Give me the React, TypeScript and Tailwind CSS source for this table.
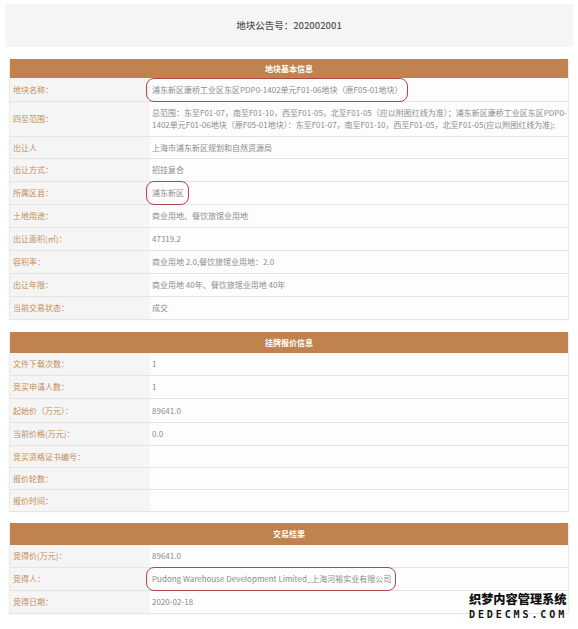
import React from "react";

type Row = { label: string; value?: React.ReactNode; h: string };

const Oval = ({ children }: { children: React.ReactNode }) => (
  <span className="relative inline-block">
    {children}
    <span className="absolute -left-[6px] -right-[5px] -top-[6px] -bottom-[6px] rounded-[8px] border-[1.5px] border-[#b0474a]" />
  </span>
);

const Section = ({ title, rows, headH }: { title: string; rows: Row[]; headH: string }) => (
  <div className="mx-[9px] border-x border-[#ececec] shadow-[0_0_2px_rgba(0,0,0,0.06)]">
    <div className={`${headH} bg-[#c0834f] flex items-center justify-center text-white text-[8px] font-bold`}>
      {title}
    </div>
    {rows.map((r, i) => (
      <div key={i} className={`${r.h} grid grid-cols-[140px_1fr] border-b border-[#e4e4e4]`}>
        <div className="bg-[#f5f5f5] flex items-center pl-[3px] text-[#c68c56] text-[8px]">{r.label}</div>
        <div className="bg-[#fdfdfd] flex items-center pl-[2px] text-[#8c8c8c] text-[8px] leading-[12px]">{r.value}</div>
      </div>
    ))}
  </div>
);

export default function App() {
  const s1: Row[] = [
    {
      label: "地块名称：",
      value: <Oval>浦东新区康桥工业区东区PDP0-1402单元F01-06地块（原F05-01地块）</Oval>,
      h: "h-[24px]",
    },
    {
      label: "四至范围：",
      value: (
        <span className="whitespace-nowrap">
          总范围：东至F01-07，南至F01-10，西至F01-05，北至F01-05（应以附图红线为准）；浦东新区康桥工业区东区PDP0-
          <br />
          1402单元F01-06地块（原F05-01地块）：东至F01-07，南至F01-10，西至F01-05，北至F01-05(应以附图红线为准);
        </span>
      ),
      h: "h-[35px]",
    },
    { label: "出让人", value: "上海市浦东新区规划和自然资源局", h: "h-[22px]" },
    { label: "出让方式：", value: "招挂复合", h: "h-[23px]" },
    { label: "所属区县：", value: <Oval>浦东新区</Oval>, h: "h-[23px]" },
    { label: "土地用途：", value: "商业用地、餐饮旅馆业用地", h: "h-[23px]" },
    { label: "出让面积(㎡)：", value: "47319.2", h: "h-[23px]" },
    { label: "容积率：", value: "商业用地 2.0,餐饮旅馆业用地：2.0", h: "h-[23px]" },
    { label: "出让年限：", value: "商业用地 40年、餐饮旅馆业用地 40年", h: "h-[23px]" },
    { label: "当前交易状态：", value: "成交", h: "h-[23px]" },
  ];
  const s2: Row[] = [
    { label: "文件下载次数：", value: "1", h: "h-[23px]" },
    { label: "竞买申请人数：", value: "1", h: "h-[23px]" },
    { label: "起始价（万元）：", value: "89641.0", h: "h-[24px]" },
    { label: "当前价格(万元)：", value: "0.0", h: "h-[23px]" },
    { label: "竞买资格证书编号：", value: "", h: "h-[22px]" },
    { label: "报价轮数：", value: "", h: "h-[22px]" },
    { label: "报价时间：", value: "", h: "h-[22px]" },
  ];
  const s3: Row[] = [
    { label: "竞得价(万元)：", value: "89641.0", h: "h-[23px]" },
    {
      label: "竞得人：",
      value: <Oval>Pudong Warehouse Development Limited_上海河裕实业有限公司</Oval>,
      h: "h-[23px]",
    },
    { label: "竞得日期：", value: "2020-02-18", h: "h-[23px]" },
  ];

  return (
    <div className="relative w-[578px] h-[629px] overflow-hidden bg-white font-['Noto_Sans_CJK_SC','Noto_Sans',sans-serif]">
      <div className="pt-[4px] px-[5px]">
        <div className="h-[43px] bg-[#f5f5f5] flex items-center justify-center text-[9.5px] font-medium text-[#555]">
          地块公告号：202002001
        </div>
      </div>
      <div className="mt-[12px]">
        <Section title="地块基本信息" rows={s1} headH="h-[19px]" />
      </div>
      <div className="mt-[12px]">
        <Section title="挂牌报价信息" rows={s2} headH="h-[21px]" />
      </div>
      <div className="mt-[11px]">
        <Section title="交易结果" rows={s3} headH="h-[22px]" />
      </div>
      <div className="absolute left-[469px] top-[592px] flex flex-col items-start [text-shadow:0_0_1px_#fff,0_0_1px_#fff]">
        <div className="text-[12.2px] leading-[15px] font-black text-[#111] font-['Noto_Sans_CJK_SC',sans-serif]">
          织梦内容管理系统
        </div>
        <div className="mt-[2px] text-[10px] leading-[12px] font-bold tracking-[2.9px] text-[#111] font-['DejaVu_Sans_Mono',monospace]">
          DEDECMS.COM
        </div>
      </div>
    </div>
  );
}
